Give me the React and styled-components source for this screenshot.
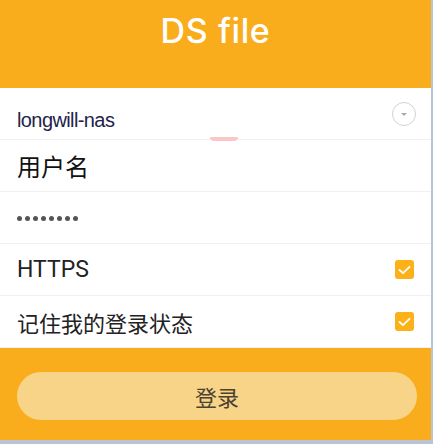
import React from "react";
import styled, { createGlobalStyle } from "styled-components";

const colors = {
  orange: "#f9ad1c",
  check: "#fbb117",
  button: "#f8d488",
  line: "#f1f1f1",
  page: "#b9c5d5",
};

const GlobalStyle = createGlobalStyle`
  body {
    margin: 0;
    background: ${colors.page};
  }
`;

const Panel = styled.div`
  width: 431px;
  height: 440px;
  display: flex;
  flex-direction: column;
  background: #fff;
  font-family: "Roboto", "Noto Sans CJK SC", sans-serif;
`;

const Header = styled.header`
  height: 88px;
  box-sizing: border-box;
  padding-top: 9px;
  background: ${colors.orange};
  display: flex;
  justify-content: center;
  align-items: flex-start;
`;

const Title = styled.h1`
  margin: 0;
  color: #fff;
  font-family: "Inter", sans-serif;
  font-weight: 500;
  font-size: 34px;
  line-height: 44px;
  letter-spacing: 0.6px;
`;

const Row = styled.div`
  position: relative;
  height: 52px;
  box-sizing: border-box;
  border-bottom: 1px solid ${colors.line};
  padding: 0 16px 0 17px;
  display: flex;
  align-items: center;
  justify-content: space-between;
`;

const Label = styled.span`
  font-family: ${({ $latin }) =>
    $latin ? '"Liberation Sans", sans-serif' : '"Noto Sans CJK SC", sans-serif'};
  font-size: ${({ $size }) => $size}px;
  color: ${({ $color }) => $color || "#222"};
  letter-spacing: ${({ $spacing }) => $spacing || 0}px;
  padding-top: ${({ $drop }) => $drop || 0}px;
  line-height: 1;
`;

const HostLabel = styled(Label)`
  color: #23234a;
`;

const Https = styled.span`
  font-family: "Roboto", sans-serif;
  font-size: 23px;
  color: #222;
`;

const DropButton = styled.div`
  flex-shrink: 0;
  box-sizing: border-box;
  width: 24px;
  height: 24px;
  border: 1.6px solid #d2d2d2;
  border-radius: 50%;
  display: flex;
  align-items: center;
  justify-content: center;
  margin-right: -1px;
`;

const Caret = styled.div`
  width: 0;
  height: 0;
  border-left: 3px solid transparent;
  border-right: 3px solid transparent;
  border-top: 3px solid #aaa;
  margin-top: 2px;
`;

const Smear = styled.div`
  position: absolute;
  left: 210px;
  bottom: -2px;
  width: 28px;
  height: 4px;
  background: #fbc6c8;
  border-radius: 0 0 12px 12px;
`;

const Dots = styled.div`
  display: flex;
  gap: 3px;
  padding-top: 1px;
`;

const Dot = styled.span`
  flex-shrink: 0;
  width: 5px;
  height: 5px;
  border-radius: 50%;
  background: #555;
`;

const CheckBox = styled.div`
  flex-shrink: 0;
  width: 19px;
  height: 19px;
  border-radius: 3px;
  background: ${colors.check};
  display: flex;
  align-items: center;
  justify-content: center;
  margin-right: 1px;
`;

const Footer = styled.footer`
  flex: 1;
  background: ${colors.orange};
  padding: 24px 16px 0 17px;
`;

const LoginButton = styled.button`
  width: 400px;
  height: 48px;
  border: none;
  border-radius: 24px;
  background: ${colors.button};
  color: #4a4232;
  font-family: "Noto Sans CJK SC", sans-serif;
  font-size: 22px;
  cursor: pointer;
`;

const Check = () => (
  <CheckBox>
    <svg width="13" height="10" viewBox="0 0 13 10">
      <path d="M1.5 5 L5 8.2 L11.5 1.8" fill="none" stroke="#fff" strokeWidth="1.8" strokeLinecap="round" strokeLinejoin="round" />
    </svg>
  </CheckBox>
);

export default function App() {
  return (
    <>
      <GlobalStyle />
      <Panel>
        <Header>
          <Title>DS file</Title>
        </Header>
        <Row>
          <HostLabel $latin $size={20} $spacing={-0.6} $drop={13}>
            longwill-nas
          </HostLabel>
          <DropButton>
            <Caret />
          </DropButton>
          <Smear />
        </Row>
        <Row>
          <Label $size={24} $color="#111">用户名</Label>
        </Row>
        <Row>
          <Dots>
            {Array.from({ length: 8 }).map((_, i) => (
              <Dot key={i} />
            ))}
          </Dots>
        </Row>
        <Row>
          <Https>HTTPS</Https>
          <Check />
        </Row>
        <Row>
          <Label $size={22}>记住我的登录状态</Label>
          <Check />
        </Row>
        <Footer>
          <LoginButton>登录</LoginButton>
        </Footer>
      </Panel>
    </>
  );
}
